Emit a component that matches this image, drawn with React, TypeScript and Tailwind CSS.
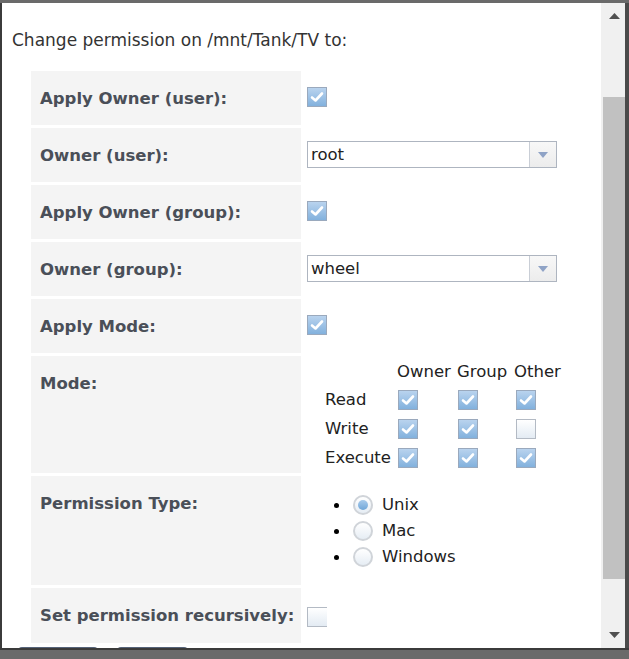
import type { ReactNode } from "react";

const font = { fontFamily: '"DejaVu Sans", Verdana, sans-serif' };

function Check({ on = true, noRight = false }: { on?: boolean; noRight?: boolean }) {
  return (
    <span
      className={`inline-flex h-[20px] w-[20px] shrink-0 items-center justify-center border ${
        noRight ? "border-r-0" : ""
      } ${
        on
          ? "border-[#9aa9bd] bg-gradient-to-b from-[#b9d3ee] to-[#82b1dd]"
          : "border-[#b3bac4] bg-gradient-to-b from-[#ffffff] to-[#e3ebf3]"
      }`}
    >
      {on && (
        <svg width="14" height="12" viewBox="0 0 14 12">
          <path d="M2 6.5 L5.5 9.5 L12 2.5" fill="none" stroke="#ffffff" strokeWidth="2.6" strokeLinecap="round" strokeLinejoin="round" />
        </svg>
      )}
    </span>
  );
}

function Radio({ on = false }: { on?: boolean }) {
  return (
    <span className="inline-flex h-[20px] w-[20px] shrink-0 items-center justify-center rounded-full border-2 border-[#d0d4d9] bg-gradient-to-b from-[#ffffff] to-[#e6edf4]">
      {on && <span className="h-[10px] w-[10px] rounded-full bg-gradient-to-b from-[#a8cbec] to-[#6fa6d8]" />}
    </span>
  );
}

function Select({ value }: { value: string }) {
  return (
    <div className="-mt-[1px] flex h-[27px] w-[250px] border border-[#aeb5c0] bg-white">
      <span className="flex-1 pl-[3px] text-[16.5px] leading-[25px] text-[#222]">{value}</span>
      <span className="flex w-[27px] items-center justify-center border-l border-[#c9ced6] bg-gradient-to-b from-[#f8f8f8] to-[#ececec]">
        <svg width="10" height="6" viewBox="0 0 10 6">
          <path d="M0 0 L10 0 L5 6 Z" fill="#8fa3c6" />
        </svg>
      </span>
    </div>
  );
}

function Row({ label, children, padBottom = "pb-[16px]" }: { label: string; children: ReactNode; padBottom?: string }) {
  return (
    <tr>
      <td className={`w-[270px] bg-[#f4f4f4] pl-[9px] pt-[18px] ${padBottom} align-top text-[16.5px] font-bold leading-5 text-[#4a4f58]`}>
        {label}
      </td>
      <td className="pl-[3px] align-middle">{children}</td>
    </tr>
  );
}

const modeRows: { name: string; vals: boolean[] }[] = [
  { name: "Read", vals: [true, true, true] },
  { name: "Write", vals: [true, true, false] },
  { name: "Execute", vals: [true, true, true] },
];

export default function App() {
  return (
    <div className="flex h-[659px] w-[629px] flex-col overflow-hidden bg-[#6a6a6a] pt-[3px]" style={font}>
      <div className="flex h-[647px] border-b-2 border-l-2 border-[#3b3b3b] bg-white">
        {/* content */}
        <div className="flex-1 overflow-hidden">
          <p className="pl-[10px] pt-[27px] text-[17px] leading-5 text-[#333]">Change permission on /mnt/Tank/TV to:</p>
          <table className="ml-[26px] mt-[18px] border-separate border-spacing-[3px]">
            <tbody>
              <Row label="Apply Owner (user):">
                <Check />
              </Row>
              <Row label="Owner (user):">
                <Select value="root" />
              </Row>
              <Row label="Apply Owner (group):">
                <Check />
              </Row>
              <Row label="Owner (group):">
                <Select value="wheel" />
              </Row>
              <Row label="Apply Mode:">
                <Check />
              </Row>
              <Row label="Mode:" padBottom="pb-0">
                <div className="grid grid-cols-[73px_60px_58px_56px] pb-[1px] pl-[18px] pt-[3px] text-[16.5px] text-[#222]">
                  <span className="h-[26px]" />
                  <span className="-ml-[1px] h-[26px] leading-[26px]">Owner</span>
                  <span className="-ml-[1px] h-[26px] leading-[26px]">Group</span>
                  <span className="-ml-[2px] h-[26px] leading-[26px]">Other</span>
                  {modeRows.map((r) => (
                    <div key={r.name} className="contents">
                      <span className="h-[29px] leading-[29px]">{r.name}</span>
                      {r.vals.map((v, i) => (
                        <span key={i} className="flex h-[29px] items-center">
                          <Check on={v} />
                        </span>
                      ))}
                    </div>
                  ))}
                </div>
              </Row>
              <Row label="Permission Type:" padBottom="pb-0">
                <ul className="pb-[15px] pl-[27px] pt-[16px] text-[16.5px] text-[#222]">
                  {["Unix", "Mac", "Windows"].map((t, i) => (
                    <li key={t} className="flex h-[26px] items-center">
                      <span className="mr-[14px] h-[5px] w-[5px] rounded-full bg-black" />
                      <Radio on={i === 0} />
                      <span className="ml-[9px]">{t}</span>
                    </li>
                  ))}
                </ul>
              </Row>
              <Row label="Set permission recursively:" padBottom="pb-[17px]">
                <span className="flex pt-[2px]">
                  <Check on={false} noRight />
                </span>
              </Row>
            </tbody>
          </table>
          <div className="ml-[16px] mt-[1px] flex gap-[19px]">
            <span className="h-[20px] w-[80px] rounded-t-sm bg-[#56647a]" />
            <span className="h-[20px] w-[71px] rounded-t-sm bg-[#56647a]" />
          </div>
        </div>
        {/* scrollbar */}
        <div className="flex w-[28px] border-r-[4px] border-[#4a4a4a] bg-[#f0f0f0]">
          <div className="flex flex-1 flex-col items-center pl-[2px]">
            <div className="flex h-[26px] items-center">
              <svg width="11" height="6" viewBox="0 0 11 6">
                <path d="M0 6 L11 6 L5.5 0 Z" fill="#505050" />
              </svg>
            </div>
            <div className="mt-[68px] h-[482px] w-full bg-[#c1c1c1]" />
            <div className="flex-1" />
            <div className="flex h-[26px] items-center">
              <svg width="11" height="6" viewBox="0 0 11 6">
                <path d="M0 0 L11 0 L5.5 6 Z" fill="#505050" />
              </svg>
            </div>
          </div>
        </div>
      </div>
    </div>
  );
}
